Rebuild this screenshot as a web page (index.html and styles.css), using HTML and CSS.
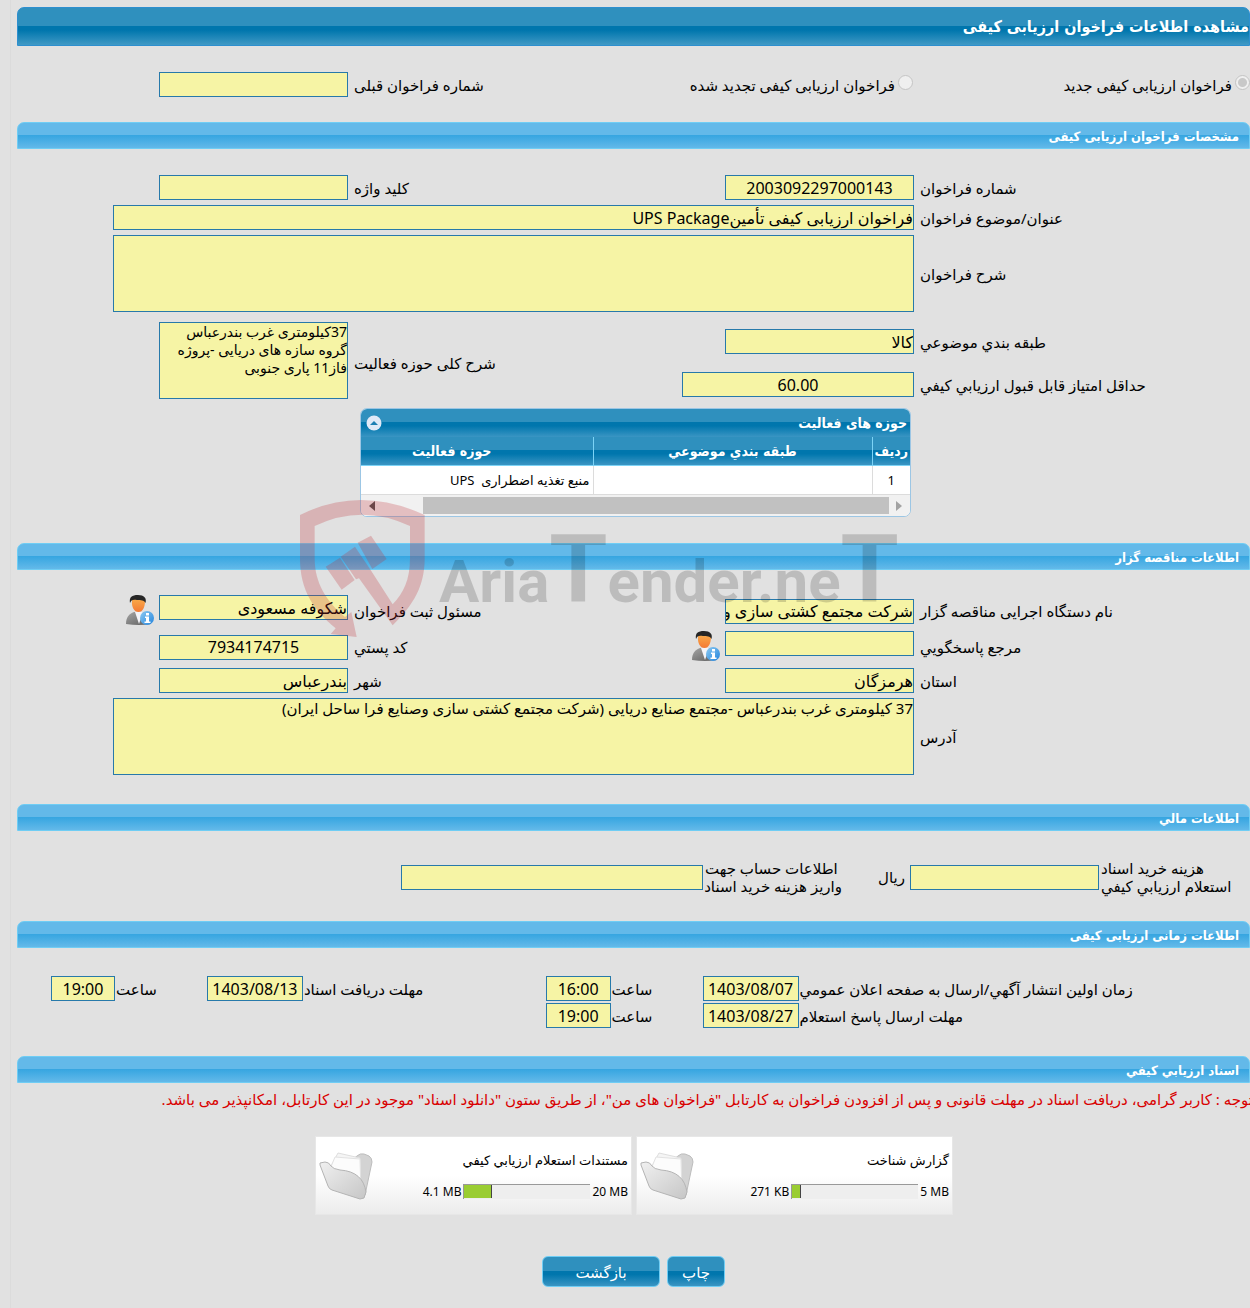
FILE: index.html
```html
<!DOCTYPE html>
<html lang="fa" dir="rtl">
<head>
<meta charset="utf-8">
<title>مشاهده اطلاعات فراخوان ارزیابی کیفی</title>
<link rel="stylesheet" href="styles.css">
</head>
<body>
<svg class="defs" width="0" height="0" aria-hidden="true">
  <defs>
    <linearGradient id="face" x1="0" y1="0" x2="0" y2="1"><stop offset="0" stop-color="#f9b04c"/><stop offset="1" stop-color="#f47a35"/></linearGradient>
    <linearGradient id="suit" x1="0" y1="0" x2="1" y2="1"><stop offset="0" stop-color="#a5a5a5"/><stop offset="1" stop-color="#5c5c5c"/></linearGradient>
    <linearGradient id="info" x1="0" y1="0" x2="1" y2="1"><stop offset="0" stop-color="#8ccaf2"/><stop offset="1" stop-color="#2384dd"/></linearGradient>
    <linearGradient id="fold" x1="0" y1="0" x2="1" y2="1"><stop offset="0" stop-color="#f0f0f0"/><stop offset="1" stop-color="#c6c6c6"/></linearGradient>
    <symbol id="user" viewBox="0 0 28 30">
      <path d="M0 29c0-7 3-10 8-12h9c5 2 8 5 8 12q-12 2-25 0z" fill="url(#suit)"/>
      <path d="M9 17l4 12 4-12z" fill="#f4f4f8"/>
      <path d="M6 6c0-5 12-5 13 0 0 6-2 11-6.500 11S5.500 12 6 6z" fill="url(#face)"/>
      <path d="M4 8C3 2 6 0 12 0s9 3 7.500 8C18 5 15 5 11 5 7 4 5 5 4 8z" fill="#262626"/>
      <circle cx="21" cy="23" r="7" fill="url(#info)"/>
      <path d="M20 18h3v2.500h-3zM19 21.500h4v5h1.500V28H18.500v-1.500H20V23h-1z" fill="#fff"/>
    </symbol>
    <symbol id="folder" viewBox="0 0 54 48">
      <path d="M30 10l8-6q3-3 7-2l5 2q3 2 3 6l-7 33-3 3-13-22z" fill="#d3d3d3" stroke="#bdbdbd"/>
      <path d="M11 16L19 1l22 5 1 35z" fill="#f5f5f5" stroke="#dedede"/>
      <path d="M11 17L16 5l25 2 1 34z" fill="#fcfcfc" stroke="#e2e2e2"/>
      <path d="M1 11l5-1q4 0 6 4 2 3 9 4c16 1 24 9 26 22l-2 6-4 1L13 38q-3-1-4-4L1 13z" fill="url(#fold)" stroke="#b4b4b4"/>
    </symbol>
  </defs>
</svg>

<div class="page">
  <h1 class="title">مشاهده اطلاعات فراخوان ارزیابی کیفی</h1>

  <div class="form type">
    <label class="choice first"><input type="radio" name="type" checked disabled>فراخوان ارزیابی کیفی جدید</label>
    <label class="choice"><input type="radio" name="type" disabled>فراخوان ارزیابی کیفی تجدید شده</label>
    <label class="lbl" for="prev">شماره فراخوان قبلی</label>
    <div class="cell"><input class="box" id="prev" readonly></div>
  </div>

  <h2 class="bar">مشخصات فراخوان ارزیابی کیفی</h2>

  <div class="form spec">
    <label class="lbl" for="num">شماره فراخوان</label>
    <div class="cell"><input class="box num" id="num" value="2003092297000143" readonly></div>
    <label class="lbl" for="key">کلید واژه</label>
    <div class="cell"><input class="box" id="key" readonly></div>

    <label class="lbl" for="subject">عنوان/موضوع فراخوان</label>
    <div class="cell wide"><input class="box" id="subject" value="فراخوان ارزیابی کیفی تأمینUPS Package" readonly></div>

    <label class="lbl" for="desc">شرح فراخوان</label>
    <div class="cell wide"><textarea class="box" id="desc" readonly></textarea></div>
  </div>

  <div class="form scope">
    <label class="lbl" for="cat">طبقه بندي موضوعي</label>
    <div class="cell"><input class="box" id="cat" value="کالا" readonly></div>
    <label class="lbl tall" for="area">شرح کلی حوزه فعالیت</label>
    <div class="cell tall"><textarea class="box" id="area" readonly>37کیلومتری غرب بندرعباس گروه سازه های دریایی -پروژه فاز11 پاری جنوبی</textarea></div>
    <label class="lbl" for="score">حداقل امتیاز قابل قبول ارزیابي کیفي</label>
    <div class="cell"><input class="box num score" id="score" value="60.00" readonly></div>
  </div>

  <div class="grid">
    <div class="grid-title">
      <span>حوزه های فعالیت</span>
      <button class="fold" type="button" aria-label="بستن"><svg width="16" height="16" viewBox="0 0 16 16"><circle cx="8" cy="8" r="7.500" fill="#dfe9f7"/><path d="M4 10l4-4 4 4z" fill="#1c7fb3"/></svg></button>
    </div>
    <table>
      <colgroup><col class="c-row"><col class="c-cat"><col class="c-area"></colgroup>
      <thead><tr><th>ردیف</th><th>طبقه بندي موضوعي</th><th>حوزه فعالیت</th></tr></thead>
      <tbody><tr><td class="center">1</td><td></td><td>منبع تغذیه اضطراری&nbsp; UPS</td></tr></tbody>
    </table>
    <div class="scroll">
      <svg width="6" height="10" viewBox="0 0 6 10"><path d="M0 0l6 5-6 5z" fill="#a3a3a3"/></svg>
      <div class="thumb"></div>
      <svg width="6" height="10" viewBox="0 0 6 10"><path d="M6 0L0 5l6 5z" fill="#505050"/></svg>
    </div>
  </div>

  <h2 class="bar">اطلاعات مناقصه گزار</h2>

  <div class="form owner">
    <label class="lbl" for="org">نام دستگاه اجرایی مناقصه گزار</label>
    <div class="cell"><input class="box" id="org" value="شرکت مجتمع کشتی سازی وصنایع فرا ساحل ایران" readonly></div>
    <label class="lbl" for="reg">مسئول ثبت فراخوان</label>
    <div class="cell person"><input class="box" id="reg" value="شکوفه مسعودی" readonly><svg width="28" height="30"><use href="#user"/></svg></div>

    <label class="lbl" for="ref">مرجع پاسخگویي</label>
    <div class="cell person"><input class="box" id="ref" readonly><svg width="28" height="30"><use href="#user"/></svg></div>
    <label class="lbl" for="zip">کد پستي</label>
    <div class="cell"><input class="box num" id="zip" value="7934174715" readonly></div>

    <label class="lbl" for="prov">استان</label>
    <div class="cell"><input class="box" id="prov" value="هرمزگان" readonly></div>
    <label class="lbl" for="city">شهر</label>
    <div class="cell"><input class="box" id="city" value="بندرعباس" readonly></div>

    <label class="lbl" for="addr">آدرس</label>
    <div class="cell wide"><textarea class="box" id="addr" readonly>37 کیلومتری غرب بندرعباس -مجتمع صنایع دریایی (شرکت مجتمع کشتی سازی وصنایع فرا ساحل ایران)</textarea></div>
  </div>

  <h2 class="bar">اطلاعات مالي</h2>

  <div class="money">
    <label for="fee">هزینه خرید اسناد<br>استعلام ارزیابي کیفي</label>
    <input class="box" id="fee" readonly>
    <span class="unit">ریال</span>
    <label for="acc">اطلاعات حساب جهت<br>واریز هزینه خرید اسناد</label>
    <input class="box account" id="acc" readonly>
  </div>

  <h2 class="bar">اطلاعات زمانی ارزیابی کیفی</h2>

  <div class="dates">
    <label for="d1">زمان اولین انتشار آگهي/ارسال به صفحه اعلان عمومي</label>
    <input class="box num" id="d1" value="1403/08/07" readonly>
    <label for="t1">ساعت</label>
    <input class="box num" id="t1" value="16:00" readonly>
    <label for="d2">مهلت دریافت اسناد</label>
    <input class="box num" id="d2" value="1403/08/13" readonly>
    <label for="t2">ساعت</label>
    <input class="box num" id="t2" value="19:00" readonly>

    <label class="newline" for="d3">مهلت ارسال پاسخ استعلام</label>
    <input class="box num" id="d3" value="1403/08/27" readonly>
    <label for="t3">ساعت</label>
    <input class="box num" id="t3" value="19:00" readonly>
  </div>

  <h2 class="bar">اسناد ارزیابي کیفي</h2>
  <p class="notice">توجه : کاربر گرامی، دریافت اسناد در مهلت قانونی و پس از افزودن فراخوان به کارتابل "فراخوان های من"، از طریق ستون "دانلود اسناد" موجود در این کارتابل، امکانپذیر می باشد.</p>

  <div class="files">
    <div class="file">
      <div class="info">
        <div>گزارش شناخت</div>
        <div class="usage"><span dir="ltr">5 MB</span><div class="meter"><div class="used" style="width:7%"></div></div><span dir="ltr">271 KB</span></div>
      </div>
      <svg width="54" height="48"><use href="#folder"/></svg>
    </div>
    <div class="file">
      <div class="info">
        <div>مستندات استعلام ارزیابي کیفي</div>
        <div class="usage"><span dir="ltr">20 MB</span><div class="meter"><div class="used" style="width:22%"></div></div><span dir="ltr">4.1 MB</span></div>
      </div>
      <svg width="54" height="48"><use href="#folder"/></svg>
    </div>
  </div>

  <div class="actions">
    <button class="btn" type="button">چاپ</button>
    <button class="btn back" type="button">بازگشت</button>
  </div>

  <div class="watermark" dir="ltr">
    <svg width="125" height="137" viewBox="30 30 375 411">
      <path fill-rule="evenodd" d="M30 75Q210 -15 404 75V205C404 290 370 345 308 406L207 265 198 268 152 200 195 170 242 240 308 343C340 310 360 270 360 205V108Q215 40 74 108V205C74 280 110 335 165 381L184 366 200 441 122 432 137 415C70 360 30 300 30 205z"/>
      <path d="M203 158L243 137 290 207 247 237zM107 230L150 203 194 270 155 299z"/>
    </svg>
    <span>Aria<big>T</big>ender.ne<big>T</big></span>
  </div>
</div>
</body>
</html>
```
FILE: styles.css
```css
body
{
  margin:0;
  padding:0 0 0 10px;
  background-color:#e1e1e1;
  overflow-x:hidden;
}

body, input, textarea, button
{
  font-family:Tahoma, "Noto Sans", "DejaVu Sans", sans-serif;
  font-size:15px;
  line-height:18px;
  color:#000;
}

.defs
{
  position:absolute;
}

.page
{
  position:relative;
  box-sizing:border-box;
  min-height:100vh;
  padding:7px 0 20px 6px;
  border-left:1px solid #dbdbdb;
}

.title, .bar
{
  box-sizing:border-box;
  margin:0;
  color:#fff;
  font-family:Tahoma, "DejaVu Sans Condensed", "DejaVu Sans", sans-serif;
  font-weight:bold;
  overflow:hidden;
  white-space:nowrap;
}

.title
{
  height:39px;
  border:1px solid #2d8fcf;
  border-radius:7px 7px 0 0;
  background:linear-gradient(#2f90be 0, #2f90be 50%, #0076ad 50%, #0076ad 60%, #4099c5 100%);
  font-size:16px;
  line-height:37px;
}

.bar
{
  height:27px;
  padding-right:10px;
  border:1px solid #6fcdf4;
  border-radius:7px 7px 0 0;
  background:linear-gradient(#63b9e9 0, #63b9e9 48%, #37a6e1 50%, #63b9e9 100%);
  font-size:13px;
  line-height:27px;
}

/* label / field / label / field */
.form
{
  display:grid;
  grid-template-columns:330fr 420fr 146fr 337fr;
  align-items:center;
}

.lbl, .money label, .dates label
{
  text-align:left;
  white-space:nowrap;
}

.cell
{
  display:flex;
  padding-right:6px;
}

.wide
{
  grid-column:2 / 5;
  margin-left:96px;
}

.box
{
  box-sizing:border-box;
  width:189px;
  height:25px;
  margin:0;
  padding:0;
  border:1px solid #2779aa;
  border-radius:0;
  background-color:#f6f4a5;
  font-size:16px;
  outline:none;
}

.num
{
  text-align:center;
}

textarea.box
{
  display:block;
  height:77px;
  font-size:15px;
  resize:none;
  overflow:hidden;
}

.tall textarea.box
{
  font-size:14px;
}

.wide .box
{
  width:100%;
}

.score
{
  width:232px;
}

.type
{
  margin:26px 0 25px;
}

.choice
{
  display:flex;
  align-items:center;
  gap:3px;
  padding-right:7px;
  white-space:nowrap;
}

.choice.first
{
  padding-right:0;
}

.choice input
{
  appearance:none;
  box-sizing:border-box;
  width:15px;
  height:15px;
  margin:0 0 4px;
  border:1px solid #c4c4c4;
  border-radius:50%;
  background:#efefef;
}

.choice input:checked
{
  background:radial-gradient(circle, #c8c8c8 0, #c8c8c8 4px, #efefef 5px);
}

.spec
{
  row-gap:5px;
  margin-top:26px;
}

.scope
{
  grid-template-rows:43px 43px;
  margin-top:8px;
}

.tall
{
  grid-row:1 / 3;
  grid-column:3;
}

.cell.tall
{
  grid-column:4;
  align-self:start;
  margin-top:2px;
}

.grid
{
  width:549px;
  margin:2px 339px 26px 0;
  border:1px solid #9cc6e4;
  border-radius:7px;
  overflow:hidden;
  background:#fff;
}

.grid-title, .grid th
{
  background:linear-gradient(#2f90be 0, #2f90be 48%, #0076ad 48%, #0076ad 60%, #3a95c3 100%);
  color:#fff;
  font-family:Tahoma, "DejaVu Sans Condensed", "DejaVu Sans", sans-serif;
  font-size:14px;
  font-weight:bold;
}

.grid-title
{
  display:flex;
  align-items:center;
  justify-content:space-between;
  height:28px;
  padding:0 3px 0 5px;
}

.fold
{
  display:flex;
  padding:0;
  border:0;
  background:none;
}

.grid table
{
  width:100%;
  table-layout:fixed;
  border-collapse:collapse;
}

.grid th
{
  height:28px;
  padding:0;
  border-bottom:1px solid #7cd3f6;
  border-left:1px solid #7cd3f6;
}

.grid td
{
  height:28px;
  padding:0 3px;
  border-bottom:1px solid #dcdcdc;
  border-left:1px solid #dcdcdc;
  font-size:13px;
}

.grid th:last-child, .grid td:last-child
{
  border-left:0;
}

.grid th:last-child
{
  padding-right:50px;
}

.grid td.center
{
  text-align:center;
}

.c-row
{
  width:38px;
}

.c-area
{
  width:232px;
}

.scroll
{
  display:flex;
  align-items:center;
  justify-content:space-between;
  height:21px;
  padding:0 8px;
  background:#f1f1f1;
}

.thumb
{
  width:466px;
  height:17px;
  margin-left:auto;
  margin-right:7px;
  background:#c1c1c1;
}

.owner
{
  grid-template-rows:38px 34px 33px 79px;
  margin:22px 0 28px;
}

.person
{
  gap:5px;
  min-height:32px;
}

.money
{
  display:flex;
  align-items:center;
  gap:2px;
  padding-right:12px;
  margin:28px 0 26px;
}

.money label
{
  width:137px;
}

.unit
{
  width:61px;
  padding-right:3px;
}

.account
{
  width:302px;
}

.dates
{
  display:grid;
  grid-template-columns:451fr 98px 90fr 67px 241fr 98px 90fr 66px 33fr;
  row-gap:2px;
  align-items:center;
  margin:28px 0;
}

.dates .box
{
  width:auto;
  margin:0 1px;
}

.newline
{
  grid-column:1;
}

.notice
{
  margin:7px -3px 28px 0;
  color:#d90000;
  white-space:nowrap;
}

.files
{
  display:flex;
  gap:4px;
  margin-right:297px;
}

.file
{
  display:flex;
  align-items:center;
  box-sizing:border-box;
  width:317px;
  height:79px;
  padding:0 3px;
  border:1px solid #e7e7e7;
  background:linear-gradient(#fff 0, #fff 50%, #ececec 100%);
  font-size:13px;
}

.info
{
  flex:1;
}

.usage
{
  display:flex;
  align-items:center;
  gap:2px;
  margin-top:14px;
  font-size:12px;
}

.meter
{
  box-sizing:border-box;
  width:127px;
  height:15px;
  border-top:1px solid #999;
  border-left:1px solid #999;
  background:#eee;
  direction:ltr;
}

.used
{
  box-sizing:border-box;
  height:13px;
  border-right:1px solid #444;
  background:#9acd32;
}

.actions
{
  display:flex;
  gap:7px;
  margin:41px 525px 0 0;
}

.btn
{
  min-width:58px;
  height:31px;
  padding:0 14px;
  border:1px solid #6fcdf4;
  border-radius:6px;
  background:linear-gradient(#2f90be 0, #2f90be 50%, #0076ad 50%, #0076ad 60%, #3a95c3 100%);
  color:#fff;
}

.back
{
  min-width:118px;
}

/* site mark laid over the whole form */
.watermark
{
  position:absolute;
  top:500px;
  left:289px;
  display:flex;
  gap:14px;
  pointer-events:none;
}

.watermark path
{
  fill:rgba(190, 45, 53, .25);
}

.watermark span
{
  color:rgba(0, 0, 0, .16);
  font-family:Roboto, "Liberation Sans", sans-serif;
  font-size:60px;
  font-weight:bold;
  line-height:140px;
}

.watermark big
{
  font-size:94px;
}
```
